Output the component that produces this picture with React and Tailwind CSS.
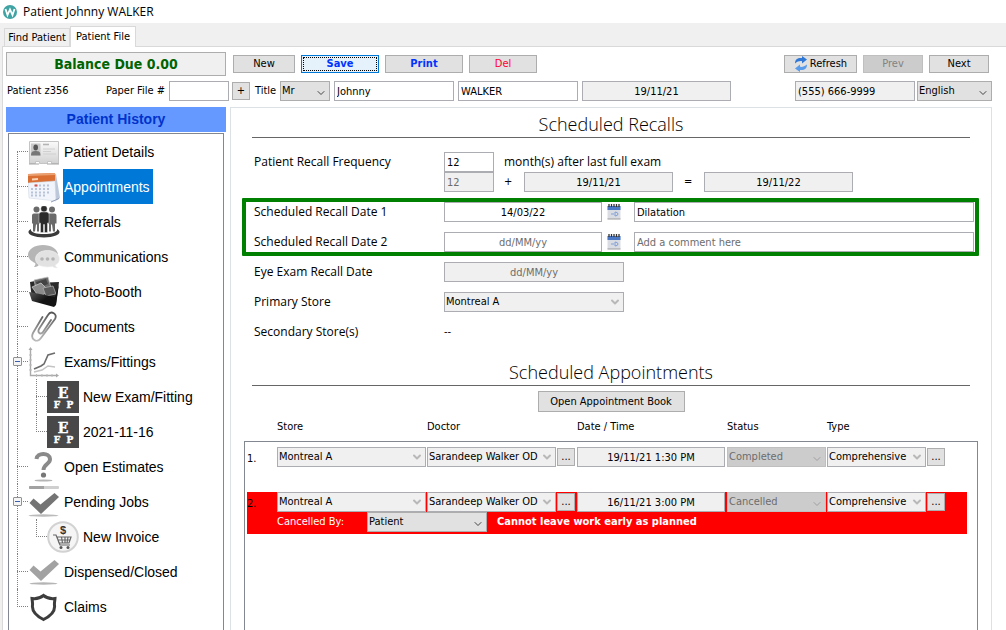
import React, { useState } from "react";
import { ChevronDown } from "lucide-react";

const HISTORY = [
  { label: "Patient Details", icon: CardIcon },
  { label: "Appointments", icon: CalendarIcon },
  { label: "Referrals", icon: PeopleIcon },
  { label: "Communications", icon: ChatIcon },
  { label: "Photo-Booth", icon: PhotosIcon },
  { label: "Documents", icon: ClipIcon },
  {
    label: "Exams/Fittings",
    icon: ChartIcon,
    children: [
      { label: "New Exam/Fitting", icon: EyeChartIcon },
      { label: "2021-11-16", icon: EyeChartIcon },
    ],
  },
  { label: "Open Estimates", icon: QuestionIcon },
  {
    label: "Pending Jobs",
    icon: PendingIcon,
    children: [{ label: "New Invoice", icon: InvoiceIcon }],
  },
  { label: "Dispensed/Closed", icon: CheckIcon },
  { label: "Claims", icon: ShieldIcon },
];

const APPOINTMENTS = [
  {
    store: "Montreal A",
    doctor: "Sarandeep Walker OD",
    time: "19/11/21 1:30 PM",
    status: "Completed",
    type: "Comprehensive",
  },
  {
    store: "Montreal A",
    doctor: "Sarandeep Walker OD",
    time: "16/11/21 3:00 PM",
    status: "Cancelled",
    type: "Comprehensive",
    cancelledBy: "Patient",
    reason: "Cannot leave work early as planned",
  },
];

function CardIcon() {
  return (
    <svg viewBox="0 0 32 32" className="size-8">
      <defs>
        <linearGradient id="card" x1="0" y1="0" x2="0" y2="1">
          <stop offset="0" stopColor="#fafafa" />
          <stop offset="1" stopColor="#d2d2d2" />
        </linearGradient>
      </defs>
      <path
        d="M1.5 5.500h29v22h-7v-2h-4v2h-8v-2h-4v2h-6z"
        fill="url(#card)"
        stroke="#c4c4c4"
      />
      <rect x="3" y="7.500" width="9.500" height="12" fill="#c9c9c9" />
      <ellipse cx="7.700" cy="11.500" rx="2.300" ry="3" fill="#555" />
      <path d="M3 19.500c0-4 2-4.500 4.700-4.500s4.800.5 4.800 4.500z" fill="#777" />
      <path d="M15 8.500h6" stroke="#b4b4b4" strokeWidth="1.600" />
      <path d="M15 13h12M15 15.500h8M15 18h13" stroke="#d0d0d0" />
      <path d="M1 28h10M19 28h12" stroke="#a5a5a5" />
    </svg>
  );
}

function CalendarIcon() {
  return (
    <svg viewBox="0 0 32 32" className="size-8">
      <path d="M26 3l2 0 4 24-5 3z" fill="#bcc7da" />
      <path d="M0 3L27 2v9L0 12z" fill="#d96f33" />
      <path d="M0 3L27 2v2L0 5z" fill="#eba072" />
      <path d="M4 8.500l6-.4" stroke="#fbd3b5" strokeWidth="2" />
      <path d="M0 12l27-2 1 20L1 27z" fill="#f1f5fb" stroke="#c9d3e2" strokeWidth=".5" />
      <path
        d="M7 14.500h2m2 0h2m2 0h2m2 0h2M3 18h2m2 0h2m2 0h2m2 0h2m2 0h2M3 21.500h2m2 0h2m2 0h2m2 0h2m2 0h2M3 24.500h2m2 0h2m2 0h2m2 0h2"
        stroke="#b8c3da"
        strokeWidth="2"
      />
      <path d="M6.500 14.500h3" stroke="#d9534a" strokeWidth="2" />
      <path d="M23 31l8-3.500" stroke="#8f9db6" />
    </svg>
  );
}

function PeopleIcon() {
  return (
    <svg viewBox="0 0 32 32" className="size-8">
      <path
        d="M3 23c-4 2-3 5 1 6.500 6 2.500 18 2.500 24 0 4-1.500 5-4.500 1-6.500 1 3-5 5-13 5S2 26 3 23z"
        fill="#3a3a3a"
      />
      <g fill="#6a6a6a">
        <circle cx="8.500" cy="3.500" r="3" />
        <path d="M4 9.500q0-2 2-2h5q2 0 2 2v8h-2v8H9v-7H8l-1 7H5v-8H4z" />
        <circle cx="24" cy="3.500" r="3" />
        <path d="M19.500 9.500q0-2 2-2h5q2 0 2 2v8H27v8h-2l-1-7h-1v7h-2v-8h-1.500z" />
      </g>
      <g fill="#2b2b2b" stroke="#fff" strokeWidth=".4">
        <circle cx="16" cy="2.800" r="3.200" />
        <path d="M11 8.500q0-2.500 2.500-2.500h5q2.500 0 2.500 2.500V17h-1.500v9.500h-3v-8h-1v8h-3v-9.500H11z" />
      </g>
    </svg>
  );
}

function ChatIcon() {
  return (
    <svg viewBox="0 0 32 32" className="size-8">
      <path
        d="M15 4c8 0 15 4 15 10s-7 11-14 11c-2 0-3 0-5-1-2 2-4 2-5 2 1-1 2-3 1-4-4-2-7-5-7-8C0 8 7 4 15 4z"
        fill="#b5b5b5"
      />
      <path
        d="M19.500 9.500C26 9.500 31.500 13 31.500 18c0 3-2 5-4 6 0 1 1 2.500 2 3-2 0-4-.5-5-1.500-1 .3-3 .5-5 .5-7 0-12-3-12-8s5-8.500 12-8.500z"
        fill="#e2e2e2"
        stroke="#f4f4f4"
        strokeWidth=".6"
      />
      <g fill="#b4b4b4">
        <circle cx="14" cy="18" r="1.800" />
        <circle cx="19.500" cy="18" r="1.800" />
        <circle cx="25" cy="18" r="1.800" />
      </g>
    </svg>
  );
}

function PhotosIcon() {
  return (
    <svg viewBox="0 0 32 32" className="size-8">
      <defs>
        <linearGradient id="folder" x1="0" y1="0" x2="1" y2="1">
          <stop offset="0" stopColor="#777" />
          <stop offset=".6" stopColor="#141414" />
        </linearGradient>
      </defs>
      <path d="M2 6l5-1 2 2 22-1-3 22-2 2L4 24z" fill="#2a2a2a" />
      <path d="M6 4l14-3 3 11-14 5z" fill="#6b6b6b" stroke="#c4c4c4" strokeWidth=".7" />
      <path d="M8 6l10-3 2 5-10 4z" fill="#444" />
      <path d="M4 11l9-4 8 8-10 6z" fill="#8c8c8c" stroke="#d5d5d5" strokeWidth=".7" />
      <path d="M15 12l10-2 3 8-10 2z" fill="#5a5a5a" stroke="#b5b5b5" strokeWidth=".7" />
      <path d="M1 16l6 1 20 4 4-13-3 21-2 2-22-6z" fill="url(#folder)" />
    </svg>
  );
}

function ClipIcon() {
  return (
    <svg viewBox="0 0 32 32" className="size-8">
      <defs>
        <linearGradient id="clip" x1="0" y1="0" x2="0" y2="1">
          <stop offset="0" stopColor="#555" />
          <stop offset="1" stopColor="#bbb" />
        </linearGradient>
      </defs>
      <path
        d="M14.500 6L5 22c-3 6 4 11 8 5L27 8c3-5-4-9-7-4l-9 14c-2 4 2 6 4 3l8-12"
        fill="none"
        stroke="url(#clip)"
        strokeWidth="1.800"
        strokeLinecap="round"
      />
    </svg>
  );
}

function ChartIcon() {
  return (
    <svg viewBox="0 0 32 32" className="size-8" fill="none">
      <path d="M2.500 3v26.500H29" stroke="#aaa" strokeWidth="1.400" />
      <path d="M.5 4l2-3 2 3zM28 27.500l3 2-3 2z" fill="#aaa" />
      <path d="M1 9h3M1 14h3M1 19h3M1 24h3M8.500 28v3M14 28v3M19 28v3M24 28v3" stroke="#bbb" />
      <path d="M6 26l8-2 6-4 7 1" stroke="#c4c4c4" strokeWidth="1.500" />
      <path d="M6 23l7-3 3-2 4-9 7-2" stroke="#6c6c6c" strokeWidth="1.600" />
    </svg>
  );
}

function EyeChartIcon() {
  return (
    <svg viewBox="0 0 32 32" className="size-8" fontFamily="DejaVu Serif, serif">
      <rect width="32" height="32" fill="#484848" />
      <g
        fill="#fff"
        stroke="#fff"
        strokeWidth=".4"
        fontWeight="bold"
        textAnchor="middle"
      >
        <text x="16" y="17" fontSize="14">
          E
        </text>
        <text x="10" y="27" fontSize="9">
          F
        </text>
        <text x="23" y="27" fontSize="9">
          P
        </text>
      </g>
    </svg>
  );
}

function QuestionIcon() {
  return (
    <svg viewBox="0 0 32 32" className="size-8">
      <path
        d="M8.500 8c.5-6.500 13-7 13.500 0 .4 5-6.500 5-6.500 11"
        fill="none"
        stroke="#8a8a8a"
        strokeWidth="4"
      />
      <circle cx="15.500" cy="24" r="2.600" fill="#777" />
      <ellipse cx="15.500" cy="29.500" rx="9" ry="1" fill="#b5b5b5" />
    </svg>
  );
}

function PendingIcon() {
  return (
    <svg viewBox="0 0 32 32" className="size-8">
      <rect x="1" y="0" width="30" height="3" rx="1" fill="#cfcfcf" />
      <path d="M2 0H16v3H2a1 1 0 01-1-1V1a1 1 0 011-1z" fill="#a2a2a2" />
      <path d="M1.500 17l4-4.500 7 6L26.500 7l4.500 4-18 17z" fill="#747474" />
      <ellipse cx="15.500" cy="29.500" rx="15" ry="1.200" fill="#bbb" />
    </svg>
  );
}

function CheckIcon() {
  return (
    <svg viewBox="0 0 32 32" className="size-8">
      <path d="M1.500 14l4-4.500 7 6L26.500 4l4.500 4-18 17z" fill="#a2a2a2" />
      <ellipse cx="15.500" cy="27.500" rx="14" ry="1.200" fill="#b5b5b5" />
    </svg>
  );
}

function InvoiceIcon() {
  return (
    <svg viewBox="0 0 32 32" className="size-8">
      <circle cx="16" cy="16" r="14.800" fill="#f5f5f5" stroke="#d2d2d2" strokeWidth="2" />
      <text
        x="16"
        y="13"
        fontSize="11"
        fontWeight="bold"
        textAnchor="middle"
        fill="#333"
        fontFamily="Liberation Sans, sans-serif"
      >
        $
      </text>
      <path
        d="M6 14h3l4 10h10M10 16h14l-2 6H12zM14.500 16l1 6M18 16v6M21 16l-1 6M11 19h12"
        fill="none"
        stroke="#666"
        strokeWidth="1.200"
      />
      <circle cx="14" cy="26.500" r="1.500" fill="#555" />
      <circle cx="21" cy="26.500" r="1.500" fill="#555" />
    </svg>
  );
}

function ShieldIcon() {
  return (
    <svg viewBox="0 0 32 32" className="size-8" fill="none">
      <path
        d="M15.500 4.500c3 2.500 7 3.500 11.500 3-.2 3-1 4.500-.4 8 0 6-5 10-11.100 13C9.500 25.500 4.500 21.500 4.400 15.500c.6-3.500-.2-5-.4-8 4.500.5 8.500-.5 11.500-3z"
        stroke="#3d3d3d"
        strokeWidth="3"
      />
    </svg>
  );
}

function DateIcon() {
  return (
    <svg viewBox="0 0 14 16" className="h-4 w-3.5">
      <rect x=".5" y="2" width="13" height="13" fill="#d9dde3" />
      <rect x=".5" y="2" width="13" height="4" fill="#4a78c4" />
      <path d="M2 0v3M4.500 0v3M7 0v3M9.500 0v3M12 0v3" stroke="#333" strokeWidth="1.300" />
      <path d="M4 10h3M8 8v4q3-.2 3-2t-3-2" fill="none" stroke="#7f9fd4" />
      <path d="M.5 15h13" stroke="#999" />
    </svg>
  );
}

function RefreshIcon() {
  return (
    <svg viewBox="0 0 14 16" className="h-4 w-3.5">
      <path d="M1 7.500C1 3 4 1.500 8 2V0l5 3.500L8 7.500V5.200C5.500 4.800 3.500 5.500 1 7.500z" fill="#2f78d6" />
      <path d="M13 8.500c0 4.500-3 6-7 5.500v2l-5-3.500 5-4v2.300c2.500.4 4.500-.3 7-2.300z" fill="#5a9bea" />
    </svg>
  );
}

function LogoIcon() {
  return (
    <svg viewBox="0 0 14 14" className="size-3.5">
      <circle cx="7" cy="7" r="7" fill="#3fa3a3" />
      <path
        d="M2.500 4l2 6L7 4.500 9.500 10l2-6"
        fill="none"
        stroke="#fff"
        strokeWidth="1.800"
      />
    </svg>
  );
}

function Button({ className = "text-black", children, ...rest }) {
  return (
    <button
      type="button"
      className={
        "flex h-[18px] items-center justify-center border border-[#adadad] bg-[#e1e1e1] leading-4 disabled:border-[#bfbfbf] disabled:bg-[#ccc] disabled:text-[#838383] " +
        className
      }
      {...rest}
    >
      {children}
    </button>
  );
}

function Field({ className = "", ...rest }) {
  return (
    <input
      className={
        "h-5 border border-[#abadb3] bg-white px-0.5 leading-4 placeholder:text-[#6d6d6d] read-only:bg-[#f0f0f0] disabled:bg-[#f0f0f0] disabled:text-[#6d6d6d] " +
        className
      }
      {...rest}
    />
  );
}

// tone: "button" for live drop-downs, "field" for read-only ones, "off" for disabled
function Select({ value, tone = "field", className = "", label, id }) {
  const tones = {
    button: "border-[#adadad] bg-[#e1e1e1] text-black",
    field: "border-[#abadb3] bg-[#f0f0f0] text-black",
    off: "border-[#bfbfbf] bg-[#ccc] text-[#6d6d6d]",
  };
  const arrows = {
    button: "top-1.5 text-[#444]",
    field: "top-1 text-[#b8b8b8]",
    off: "top-1.5 text-[#a0a0a0]",
  };

  return (
    <span className={"relative block h-5 " + className}>
      <select
        id={id}
        aria-label={label}
        disabled={tone === "off"}
        className={
          "block size-full appearance-none border px-px leading-4 opacity-100 " +
          tones[tone]
        }
      >
        <option>{value}</option>
      </select>
      <ChevronDown
        className={"pointer-events-none absolute right-[3px] size-3 " + arrows[tone]}
        strokeWidth={tone === "field" ? 4 : 2}
      />
    </span>
  );
}

function TreeRow({ item, child, first, last, selected, onSelect }) {
  const Icon = item.icon;
  return (
    <div className={"flex h-[35px] items-center " + (child ? "pl-[27px]" : "pl-2")}>
      <span className="relative h-full w-[11px] shrink-0">
        <span
          className={
            "absolute left-0 border-l border-dotted border-[#808080] " +
            (first ? "top-[17px] bottom-0" : last ? "top-0 h-[18px]" : "top-0 h-full")
          }
        />
        <span className="absolute top-[17px] left-0 w-full border-t border-dotted border-[#808080]" />
        {item.children && (
          <span className="absolute top-[13px] -left-1 flex size-[9px] items-center justify-center rounded-[1px] border border-[#919191] bg-[#f5f5f5]">
            <span className="h-px w-[5px] bg-[#3a5fae]" />
          </span>
        )}
      </span>
      <Icon />
      <button
        type="button"
        onClick={() => onSelect(item.label)}
        className={
          "ml-[3px] h-full px-px pr-[3px] text-sm " +
          (selected === item.label ? "bg-[#0078d7] text-white" : "text-black")
        }
      >
        {item.label}
      </button>
    </div>
  );
}

function HistoryTree() {
  const [selected, setSelected] = useState("Appointments");

  return (
    <aside className="flex w-[220px] shrink-0 flex-col font-['Liberation_Sans',sans-serif]">
      <h2 className="h-[25px] bg-[#6699ff] text-center text-sm leading-6 font-bold text-[#0033cc]">
        Patient History
      </h2>
      <ul className="mx-0.5 mt-px flex-1 border border-b-0 border-[#828790] bg-white">
        {HISTORY.map((item, i) => (
          <li key={item.label} className="relative">
            <TreeRow
              item={item}
              first={i === 0}
              last={i === HISTORY.length - 1}
              selected={selected}
              onSelect={setSelected}
            />
            {item.children && (
              <ul>
                <li className="absolute top-[35px] bottom-0 left-2 border-l border-dotted border-[#808080]" />
                {item.children.map((child, j) => (
                  <li key={child.label}>
                    <TreeRow
                      item={child}
                      child
                      last={j === item.children.length - 1}
                      selected={selected}
                      onSelect={setSelected}
                    />
                  </li>
                ))}
              </ul>
            )}
          </li>
        ))}
      </ul>
    </aside>
  );
}

function SectionTitle({ children }) {
  return (
    <h2 className="mx-[21px] h-[30px] border-b border-[#666] text-center font-['Open_Sans',sans-serif] text-lg leading-8 font-light">
      {children}
    </h2>
  );
}

function FormLabel({ children, ...rest }) {
  return (
    <label
      className="w-[190px] shrink-0 font-['Open_Sans',sans-serif] text-xs leading-5"
      {...rest}
    >
      {children}
    </label>
  );
}

function RecallRow({ id, label, date, comment }) {
  return (
    <div className="flex items-center">
      <FormLabel htmlFor={id}>{label}</FormLabel>
      <Field
        id={id}
        className="w-[158px] text-center"
        placeholder="dd/MM/yy"
        defaultValue={date}
      />
      <button type="button" aria-label={"Pick " + label} className="mx-[5px] flex w-[22px]">
        <DateIcon />
      </button>
      <Field
        aria-label={label + " comment"}
        className="min-w-0 flex-1"
        placeholder="Add a comment here"
        defaultValue={comment}
      />
    </div>
  );
}

function Recalls() {
  return (
    <section>
      <SectionTitle>Scheduled Recalls</SectionTitle>
      <div className="mt-3.5 ml-[23px] flex">
        <FormLabel htmlFor="frequency">Patient Recall Frequency</FormLabel>
        <div>
          <div className="flex items-center">
            <Field id="frequency" className="w-[50px]" defaultValue="12" />
            <span className="ml-2.5 font-['Open_Sans',sans-serif] text-xs">
              month(s) after last full exam
            </span>
          </div>
          <div className="flex items-center">
            <Field aria-label="Months" className="w-[50px]" defaultValue="12" disabled />
            <span className="w-[30px] pl-2.5">+</span>
            <Field
              aria-label="Last exam"
              className="w-[149px] text-center"
              defaultValue="19/11/21"
              readOnly
            />
            <span className="w-[31px] pl-[11px]">=</span>
            <Field
              aria-label="Next recall"
              className="w-[149px] text-center"
              defaultValue="19/11/22"
              readOnly
            />
          </div>
        </div>
      </div>

      <div className="mt-1.5 mr-3 ml-[11px] flex flex-col gap-2.5 rounded-[1px] border-4 border-[#008000] pr-px pl-2">
        <RecallRow
          id="recall1"
          label="Scheduled Recall Date 1"
          date="14/03/22"
          comment="Dilatation"
        />
        <RecallRow id="recall2" label="Scheduled Recall Date 2" />
      </div>

      <div className="mt-1.5 ml-[23px] flex flex-col gap-2.5">
        <div className="flex items-center">
          <FormLabel htmlFor="eyeExam">Eye Exam Recall Date</FormLabel>
          <Field
            id="eyeExam"
            className="w-[180px] text-center"
            placeholder="dd/MM/yy"
            readOnly
          />
        </div>
        <div className="flex items-center">
          <FormLabel htmlFor="primaryStore">Primary Store</FormLabel>
          <Select id="primaryStore" value="Montreal A" className="w-[180px]" />
        </div>
        <div className="flex items-center">
          <span className="w-[190px] font-['Open_Sans',sans-serif] text-xs leading-5">
            Secondary Store(s)
          </span>
          <span>--</span>
        </div>
      </div>
    </section>
  );
}

function AppointmentRow({ appt, index }) {
  return (
    <tr
      className={
        "grid grid-cols-[30px_150px_150px_150px_100px_1fr] " +
        (appt.cancelledBy ? "bg-[red] pb-0.5" : "mb-[25px]")
      }
    >
      <td className="pt-1">{index + 1}.</td>
      <td>
        <Select label="Store" value={appt.store} className="w-[149px]" />
      </td>
      <td className="flex items-center gap-px">
        <Select label="Doctor" value={appt.doctor} className="w-[129px]" />
        <Button className="w-[18px]">...</Button>
      </td>
      <td>
        <Field
          aria-label="Date / Time"
          className="block w-[148px] text-center"
          defaultValue={appt.time}
          readOnly
        />
      </td>
      <td>
        <Select label="Status" tone="off" value={appt.status} className="w-[99px]" />
      </td>
      <td className="flex items-center gap-px">
        <Select label="Type" value={appt.type} className="w-[99px]" />
        <Button className="w-[18px]">...</Button>
      </td>
      {appt.cancelledBy && (
        <td className="col-span-5 col-start-2 flex items-center text-white">
          <span className="w-[90px]">Cancelled By:</span>
          <Select
            label="Cancelled By"
            tone="button"
            value={appt.cancelledBy}
            className="w-[120px]"
          />
          <strong className="ml-2.5">{appt.reason}</strong>
        </td>
      )}
    </tr>
  );
}

function Appointments() {
  return (
    <section className="mt-3.5 flex flex-1 flex-col">
      <SectionTitle>Scheduled Appointments</SectionTitle>
      <Button className="mx-auto mt-[5px] h-[21px] w-[147px]">Open Appointment Book</Button>
      <table className="mx-[13px] flex flex-1 flex-col">
        <thead className="block">
          <tr className="grid h-[29px] grid-cols-[33px_150px_150px_150px_100px_1fr] items-center text-left">
            <th />
            <th className="font-normal">Store</th>
            <th className="font-normal">Doctor</th>
            <th className="font-normal">Date / Time</th>
            <th className="font-normal">Status</th>
            <th className="font-normal">Type</th>
          </tr>
        </thead>
        <tbody className="block flex-1 border border-b-0 border-[#828790] pt-[5px] pr-2.5 pl-0.5">
          {APPOINTMENTS.map((appt, i) => (
            <AppointmentRow key={appt.time} appt={appt} index={i} />
          ))}
        </tbody>
      </table>
    </section>
  );
}

function Toolbar() {
  return (
    <header>
      <div className="flex items-center gap-1.5">
        <div className="mr-px flex h-6 w-[220px] items-center justify-center border border-[#adadad] bg-[#f0f0f0] text-sm font-bold text-[#006400]">
          Balance Due 0.00
        </div>
        <Button className="w-[62px]">New</Button>
        <button
          type="button"
          className="h-[18px] w-[78px] border border-[#0078d7] bg-[#e5f1fb] p-px font-bold text-[#0033ff]"
        >
          <span className="flex h-full items-center justify-center border border-dotted border-black">
            Save
          </span>
        </button>
        <Button className="w-[78px] font-bold text-[#0033ff]">Print</Button>
        <Button className="w-[68px] text-[#ff0033]">Del</Button>
        <Button className="ml-auto w-[73px] gap-0.5">
          <RefreshIcon />
          Refresh
        </Button>
        <Button className="w-[60px]" disabled>
          Prev
        </Button>
        <Button className="mr-[3px] w-[60px]">Next</Button>
      </div>

      <div className="mt-[5px] flex items-center">
        <span className="w-[100px] pl-px">Patient z356</span>
        <label htmlFor="paperFile" className="w-[63px]">
          Paper File #
        </label>
        <Field id="paperFile" className="w-[60px]" />
        <Button className="ml-[3px] w-[18px]">+</Button>
        <label htmlFor="title" className="w-[30px] pl-[5px]">
          Title
        </label>
        <Select id="title" tone="button" value="Mr" className="w-[50px]" />
        <Field aria-label="First name" className="ml-1 w-[120px]" defaultValue="Johnny" />
        <Field aria-label="Last name" className="ml-1 w-[120px]" defaultValue="WALKER" />
        <Field
          aria-label="Date"
          className="ml-1 w-[149px] text-center"
          defaultValue="19/11/21"
          readOnly
        />
        <Field
          aria-label="Phone"
          className="ml-auto w-[120px]"
          defaultValue="(555) 666-9999"
          readOnly
        />
        <Select label="Language" tone="button" value="English" className="ml-0.5 w-[75px]" />
      </div>
    </header>
  );
}

export default function App() {
  return (
    <div className="flex min-h-screen flex-col bg-[#f0f0f0] font-['DejaVu_Sans_Condensed','Noto_Sans',sans-serif] text-[11px] leading-4 text-black">
      <div className="flex h-[23px] items-center gap-1.5 bg-white pl-[3px] font-['Open_Sans',sans-serif] text-xs">
        <LogoIcon />
        Patient Johnny WALKER
      </div>

      <nav className="flex h-[23px] items-end pl-1">
        <button type="button" className="h-[18px] w-[66px] border border-b-0 border-[#d9d9d9]">
          Find Patient
        </button>
        <button
          type="button"
          className="relative -mb-px h-[21px] w-[66px] border border-b-0 border-[#d9d9d9] bg-white pb-px"
        >
          Patient File
        </button>
      </nav>

      <div className="ml-0.5 flex flex-1 flex-col border-t border-l border-[#d9d9d9] bg-white pt-[5px] pr-3.5 pl-[3px]">
        <Toolbar />
        <div className="mt-1.5 flex flex-1 gap-1">
          <HistoryTree />
          <main className="flex min-w-0 flex-1 flex-col border border-b-0 border-[#dce1e6]">
            <Recalls />
            <Appointments />
          </main>
        </div>
      </div>
    </div>
  );
}
